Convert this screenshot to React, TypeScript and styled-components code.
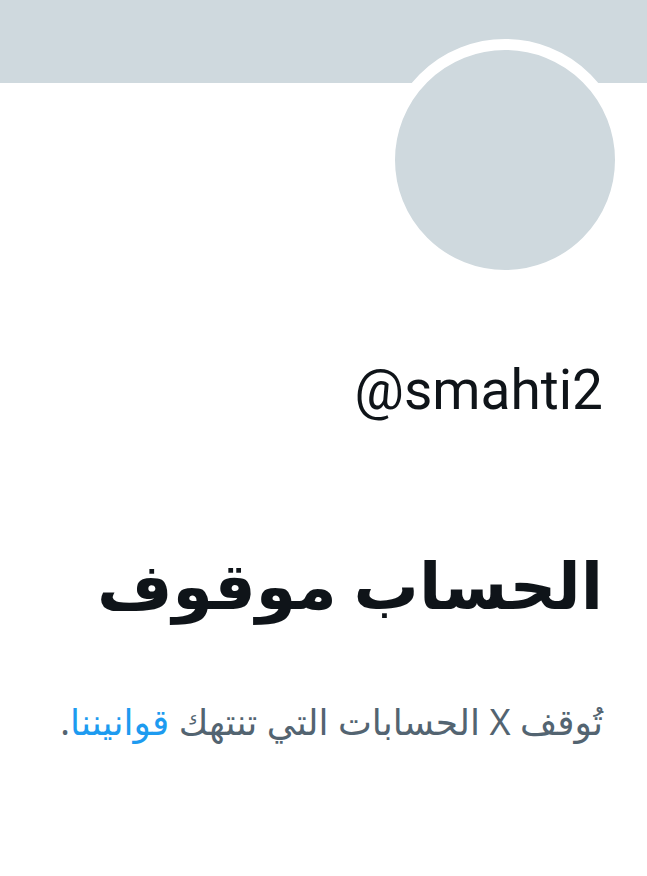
import React from 'react';
import styled, { createGlobalStyle } from 'styled-components';

const GlobalStyle = createGlobalStyle`
  html, body {
    margin: 0;
    padding: 0;
    background: #ffffff;
  }
`;

const App: React.FC = () => (
  <Page dir="rtl">
    <GlobalStyle />
    <Banner />
    <AvatarRow>
      <Avatar />
    </AvatarRow>
    <Content>
      <Handle dir="ltr">@smahti2</Handle>
      <Title>الحساب موقوف</Title>
      <Notice>
        تُوقف X الحسابات التي تنتهك <Link href="#">قوانيننا</Link>.
      </Notice>
    </Content>
  </Page>
);

const Page = styled.div`
  width: 647px;
  min-height: 876px;
  background: #ffffff;
  font-family: 'Noto Sans', 'DejaVu Sans', sans-serif;
`;

const Banner = styled.div`
  height: 83px;
  background: #cfd9de;
`;

const AvatarRow = styled.div`
  display: flex;
  padding: 0 21px;
  margin-top: -44px;
`;

const Avatar = styled.div`
  width: 220px;
  height: 220px;
  border-radius: 50%;
  background: #cfd9de;
  border: 11px solid #ffffff;
`;

const Content = styled.div`
  padding: 0 44px;
  display: flex;
  flex-direction: column;
`;

const Handle = styled.div`
  margin-top: 77px;
  align-self: flex-start;
  font-family: Roboto, 'Liberation Sans', sans-serif;
  font-size: 55px;
  line-height: 64px;
  color: #0f1419;
`;

const Title = styled.h1`
  margin: 119px 0 0;
  font-size: 65px;
  font-weight: 700;
  line-height: 86px;
  color: #0f1419;
`;

const Notice = styled.p`
  margin: 70px 0 0;
  font-size: 36px;
  line-height: 50px;
  color: #536471;
`;

const Link = styled.a`
  color: #1d9bf0;
  text-decoration: none;
`;

export default App;
